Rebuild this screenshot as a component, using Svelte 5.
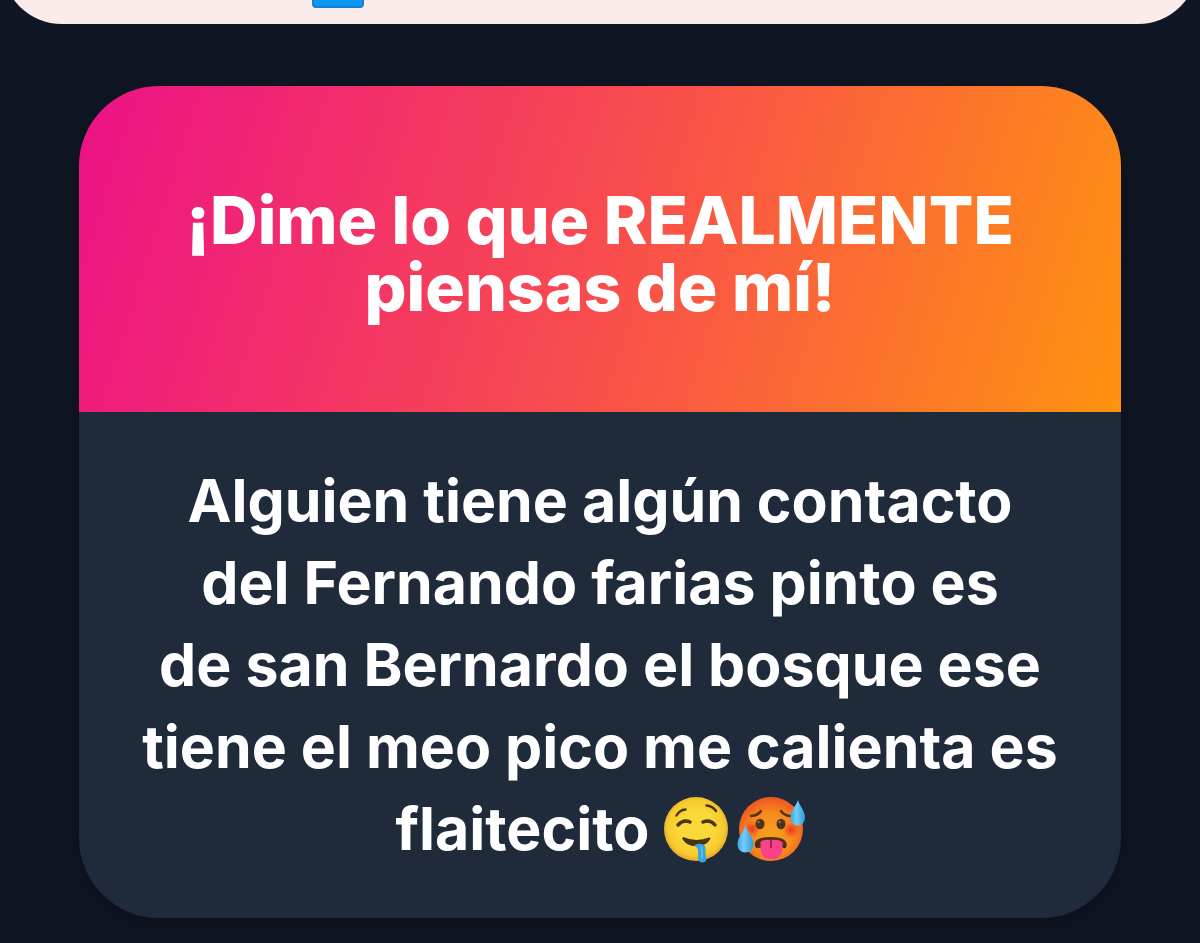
<script>
	const title = '¡Dime lo que REALMENTE\npiensas de mí!';
	const message = [
		'Alguien tiene algún contacto',
		'del Fernando farias pinto es',
		'de san Bernardo el bosque ese',
		'tiene el meo pico me calienta es',
		'flaitecito'
	];
</script>

<div class="page">
	<div class="banner">
		<span class="badge"></span>
	</div>

	<article class="card">
		<header>
			<h1>{title}</h1>
		</header>

		<p>
			{#each message as line, i}
				<span class="line">
					{line}
					{#if i === message.length - 1}
						<span class="emojis">
							<svg viewBox="0 0 66 68" role="img" aria-label="drooling face">
								<defs>
									<radialGradient id="yellow" cx="50%" cy="48%" r="52%">
										<stop offset="0.5" stop-color="#fbd938" />
										<stop offset="0.85" stop-color="#f6ca2d" />
										<stop offset="1" stop-color="#e8a52b" />
									</radialGradient>
								</defs>
								<circle cx="33" cy="33" r="32" fill="url(#yellow)" />
								<g fill="none" stroke="#4b3613" stroke-linecap="round">
									<path d="M13.500 19.500Q16.500 14 22.500 13.500" stroke-width="2.400" />
									<path d="M43.500 9.500Q49.500 10 53 15" stroke-width="2.400" />
									<path d="M15 29Q20.500 23 27 26" stroke-width="3.400" />
									<path d="M40 26Q47 23 52 29" stroke-width="3.400" />
								</g>
								<path d="M20 41Q18.500 42 20 44Q25 51 35 50Q44 49 47 43.500Q48 41.500 46 41.500Q33 46.500 20 41Z" fill="#4b3210" />
								<path d="M31 49Q37 46.500 41 49Q43 51 42.500 56Q42.500 61 43.500 63Q43 66.500 39 66.500Q35 66 35 61V54Q34.500 51 31 49Z" fill="#36a4df" />
								<path d="M38 51Q39.500 53 39 62" fill="none" stroke="#58bbea" stroke-width="2" stroke-linecap="round" />
							</svg>
							<svg viewBox="0 0 66 68" role="img" aria-label="hot face">
								<defs>
									<radialGradient id="orange" cx="50%" cy="58%" r="56%">
										<stop offset="0" stop-color="#f9a11e" />
										<stop offset="0.6" stop-color="#f68a1e" />
										<stop offset="1" stop-color="#ee5a20" />
									</radialGradient>
									<radialGradient id="blush">
										<stop offset="0" stop-color="#ef3526" />
										<stop offset="1" stop-color="#ef3526" stop-opacity="0" />
									</radialGradient>
									<linearGradient id="drop" x1="0" x2="1">
										<stop offset="0" stop-color="#3ba8e8" />
										<stop offset="0.4" stop-color="#73cdf7" />
										<stop offset="1" stop-color="#3298dc" />
									</linearGradient>
								</defs>
								<circle cx="33" cy="33" r="32" fill="url(#orange)" />
								<circle cx="14" cy="33" r="8" fill="url(#blush)" />
								<circle cx="53" cy="34" r="8" fill="url(#blush)" />
								<g fill="none" stroke="#57310d" stroke-width="2.400" stroke-linecap="round">
									<path d="M13 20Q20 19.500 23 15" />
									<path d="M43 15Q46 19.500 52 20" />
								</g>
								<ellipse cx="22" cy="28" rx="4.500" ry="5.300" fill="#49331a" />
								<ellipse cx="43" cy="28" rx="4.500" ry="5.300" fill="#49331a" />
								<circle cx="20.500" cy="26" r="1.200" fill="#97794f" />
								<circle cx="41.500" cy="26" r="1.200" fill="#97794f" />
								<path d="M17 47Q18 41 33 41Q47 41 48.500 47Q49.500 53 45 52Q33 49 21 52Q16 53 17 47Z" fill="#513012" />
								<path d="M22.500 46Q25 43 32.500 44Q40 43 44.500 46V54Q43 63 33.500 63Q24 63 22.500 54Z" fill="#f8418b" />
								<path d="M33 44V51" stroke="#a81d55" stroke-width="2" stroke-linecap="round" />
								<path d="M60 4C61.500 10 67 15 67 21C67 26 64 29.500 60 29.500C56 29.500 52.500 26 52.500 21C52.500 15 58 10 60 4Z" fill="url(#drop)" />
								<path d="M7.500 29C9 36 15.500 41 15.500 48C15.500 53 12 56.500 7.500 56.500C3 56.500-.5 53-.5 48C-.5 41 6 36 7.500 29Z" fill="url(#drop)" />
							</svg>
						</span>
					{/if}
				</span>
			{/each}
		</p>
	</article>
</div>

<style>
	:global(body) {
		margin: 0;
		background-color: #101623;
	}

	.page {
		min-height: 100vh;
		box-sizing: border-box;
		padding-bottom: 24px;
		overflow: hidden;
		font-family: Inter, 'Liberation Sans', sans-serif;
		color: #fff;
	}

	/* the previous bubble, scrolled mostly out of view */
	.banner {
		display: flex;
		align-items: flex-end;
		height: 184px;
		margin: -160px 2px 62px;
		padding: 0 0 16px 310px;
		box-sizing: border-box;
		border-radius: 60px;
		background-color: #faeceb;
	}

	.badge {
		width: 52px;
		height: 52px;
		box-sizing: border-box;
		border-radius: 4px;
		border: 2px solid #1580d8;
		background-color: #0c97f3;
	}

	.card {
		margin: 0 79px;
		border-radius: 80px;
		overflow: hidden;
		background-color: #1f2a3b;
		box-shadow: 0 8px 24px rgba(14, 14, 26, 0.8);
	}

	header {
		padding: 101px 40px 91px;
		background: linear-gradient(107deg, #ec1187 0%, #f94e4c 52%, #ff9310 100%);
	}

	h1 {
		margin: 0;
		font-size: 66px;
		font-weight: 800;
		line-height: 67px;
		text-align: center;
		white-space: pre-line;
	}

	p {
		margin: 0;
		padding: 48px 40px;
		font-size: 59px;
		font-weight: 700;
		line-height: 82px;
		text-align: center;
	}

	.line {
		display: block;
		white-space: nowrap;
	}

	.emojis {
		display: inline-flex;
		gap: 9px;
		vertical-align: -14px;
	}

	.emojis svg {
		width: 66px;
		height: 68px;
		overflow: visible;
	}
</style>
